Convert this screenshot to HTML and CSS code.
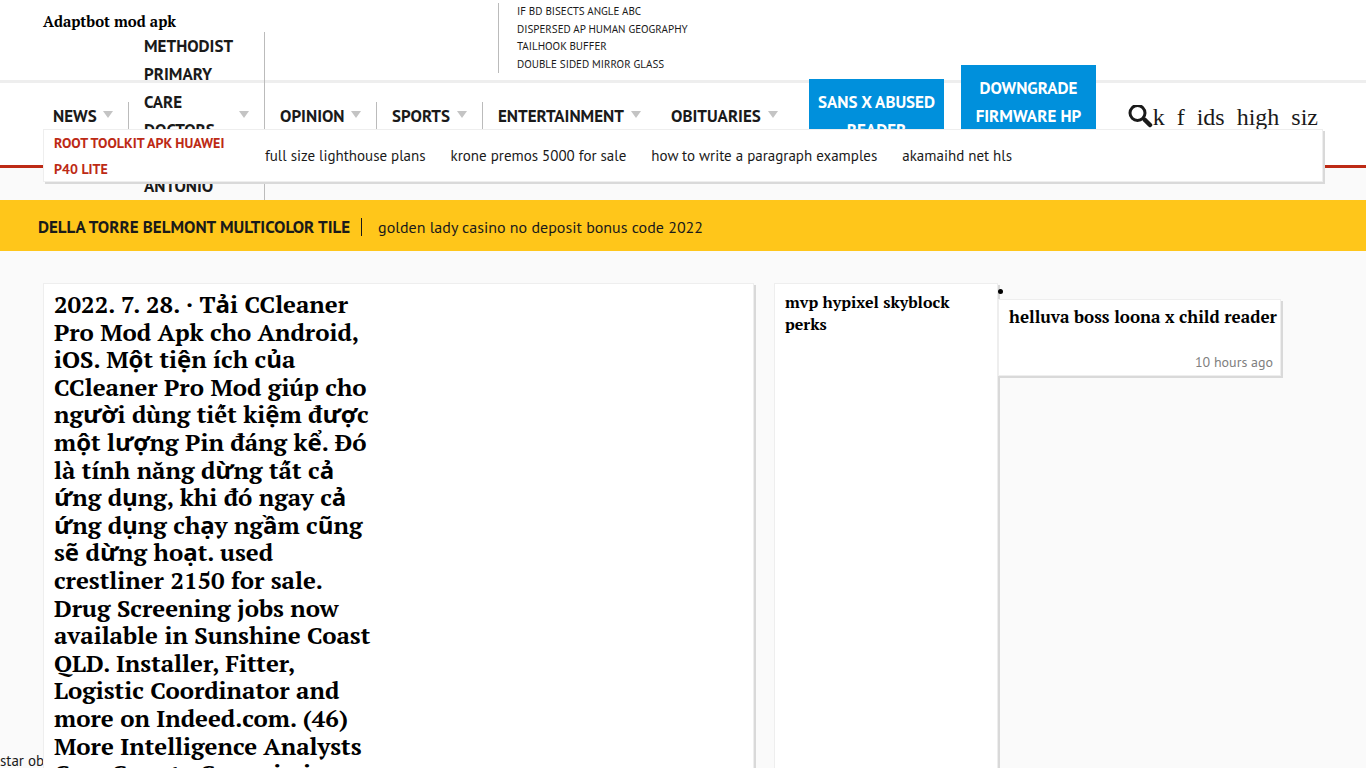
FILE: index.html
```html
<!DOCTYPE html>
<html lang="en">
<head>
<meta charset="utf-8">
<title>Adaptbot mod apk</title>
<link rel="stylesheet" href="styles.css">
</head>
<body>
<header class="site-header">
  <div class="masthead">
    <h1 class="site-title">Adaptbot mod apk</h1>
    <ul class="quick-links">
      <li><a href="#">If bd bisects angle abc</a></li>
      <li><a href="#">Dispersed ap human geography</a></li>
      <li><a href="#">Tailhook buffer</a></li>
      <li><a href="#">Double sided mirror glass</a></li>
    </ul>
  </div>
  <nav class="main-nav">
    <ul class="menu">
      <li class="menu-item divided item-news"><a href="#">News</a><i class="caret"></i></li>
      <li class="menu-item divided item-doctors"><a href="#">Methodist<br>primary<br>care<br>doctors<br>san<br>antonio</a><i class="caret"></i></li>
      <li class="menu-item divided item-opinion"><a href="#">Opinion</a><i class="caret"></i></li>
      <li class="menu-item divided item-sports"><a href="#">Sports</a><i class="caret"></i></li>
      <li class="menu-item item-entertainment"><a href="#">Entertainment</a><i class="caret"></i></li>
      <li class="menu-item item-obituaries"><a href="#">Obituaries</a><i class="caret"></i></li>
    </ul>
    <div class="promos">
      <a class="promo" href="#">Sans x abused<br>reader</a>
      <a class="promo" href="#">Downgrade<br>firmware hp<br>&nbsp;</a>
    </div>
    <button class="search" type="button">
      <svg width="25" height="25" viewBox="0 0 25 25" aria-hidden="true"><circle cx="9.500" cy="8" r="7.500" fill="none" stroke="currentColor" stroke-width="3"/><path d="M15 13.500L17.500 16" stroke="currentColor" stroke-width="3"/><path d="M17 15L22 20" stroke="currentColor" stroke-width="4.500" stroke-linecap="round"/></svg><span>k&nbsp; f&nbsp; ids&nbsp; high&nbsp; siz</span>
    </button>
  </nav>
</header>
<nav class="subnav">
  <a class="subnav-title" href="#">Root toolkit apk huawei<br>p40 lite</a>
  <ul class="subnav-links">
    <li><a href="#">full size lighthouse plans</a></li>
    <li><a href="#">krone premos 5000 for sale</a></li>
    <li><a href="#">how to write a paragraph examples</a></li>
    <li><a href="#">akamaihd net hls</a></li>
  </ul>
</nav>
<section class="banner">
  <a class="banner-title" href="#">Della torre belmont multicolor tile</a>
  <a class="banner-text" href="#">golden lady casino no deposit bonus code 2022</a>
</section>
<p class="ticker">star ob</p>
<main class="content">
  <article class="card lead">
    <h2>2022. 7. 28. · Tải CCleaner<br>Pro Mod Apk cho Android,<br>iOS. Một tiện ích của<br>CCleaner Pro Mod giúp cho<br>người dùng tiết kiệm được<br>một lượng Pin đáng kể. Đó<br>là tính năng dừng tất cả<br>ứng dụng, khi đó ngay cả<br>ứng dụng chạy ngầm cũng<br>sẽ dừng hoạt. used<br>crestliner 2150 for sale.<br>Drug Screening jobs now<br>available in Sunshine Coast<br>QLD. Installer, Fitter,<br>Logistic Coordinator and<br>more on Indeed.com. (46)<br>More Intelligence Analysts<br>Cass County Commission</h2>
  </article>
  <article class="card second"><h3>mvp hypixel skyblock perks</h3></article>
  <ul class="latest">
    <li><article class="card latest-card"><h3>helluva boss loona x child reader</h3><time>10 hours ago</time></article></li>
  </ul>
</main>
</body>
</html>
```
FILE: styles.css
```css
* { box-sizing: border-box; }
body {
  position: relative;
  margin: 0;
  background: #fafafa;
  color: #1a1a1a;
  font-family: "PT Sans", Lato, "Noto Sans", sans-serif;
  font-size: 15px;
}
a { color: inherit; text-decoration: none; }
ul { margin: 0; padding: 0; list-style: none; }
h1, h2, h3, p { margin: 0; }
h1, h2, h3 { color: #000; font-family: "PT Serif", "Open Sans", "Liberation Serif", serif; }

.site-header { background: #fff; border-bottom: 3px solid #bd2a15; }
.masthead {
  display: flex;
  height: 83px;
  padding: 3px 43px 7px;
  border-bottom: 3px solid #eee;
}
.site-title { width: 455px; padding-top: 8px; font-size: 15px; line-height: 20px; }
.quick-links {
  padding-left: 18px;
  border-left: 1px solid #bbb;
  font-size: 11px;
  line-height: 1.6;
  text-transform: uppercase;
}
.main-nav {
  display: flex;
  align-items: center;
  height: 82px;
  padding: 0 43px 16px 38px;
  font-size: 17px;
  font-weight: 700;
  line-height: 28px;
  text-transform: uppercase;
}
.menu { display: flex; align-items: center; }
.menu-item {
  display: flex;
  align-items: center;
  justify-content: space-between;
  padding: 0 15px;
}
.divided { border-right: 1px solid #bbb; }
.item-news { width: 91px; }
.item-doctors { width: 136px; }
.item-opinion { width: 112px; }
.item-sports { width: 106px; }
.item-entertainment { width: 173px; }
.item-obituaries { width: 137px; }
.caret {
  flex: none;
  margin-bottom: 4px;
  border: 5px solid transparent;
  border-top: 7px solid #c4c4c4;
  border-bottom: 0;
}
.promos { display: flex; align-items: center; gap: 17px; margin-left: 16px; }
.promo {
  width: 135px;
  padding: 9px 4px;
  background: #0090dc;
  color: #fff;
  text-align: center;
  white-space: nowrap;
}
.search {
  display: flex;
  align-items: center;
  margin-left: auto;
  padding: 2px 5px 0 0;
  border: 0;
  background: none;
  color: #1a1a1a;
  font: 24px/28px "Liberation Serif", serif;
}

.subnav {
  position: relative;
  z-index: 1;
  display: flex;
  align-items: center;
  height: 53px;
  margin: -39px 43px 18px;
  padding: 0 10px;
  border: 1px solid #eee;
  background: #fff;
  box-shadow: 2px 2px 0 #d9d9d9;
}
.subnav-title {
  width: 211px;
  color: #bd2a15;
  font-size: 14px;
  font-weight: 700;
  line-height: 26px;
  text-transform: uppercase;
}
.subnav-links { display: flex; gap: 25px; }

.banner {
  position: relative;
  display: flex;
  align-items: center;
  height: 51px;
  padding: 3px 38px 0;
  background: #ffc61a;
  font-size: 16px;
  line-height: 18px;
}
.banner-title {
  padding-right: 11px;
  border-right: 1px solid #1a1a1a;
  font-size: 17px;
  font-weight: 700;
  text-transform: uppercase;
}
.banner-text { padding-left: 16px; }

.ticker { position: absolute; top: 751px; left: 0; line-height: 20px; }
.content {
  position: relative;
  display: flex;
  padding: 32px 43px 0;
}
.card {
  border: 1px solid #eee;
  background: #fff;
  box-shadow: 2px 2px 0 #d9d9d9;
}
.lead { flex: 0 1 711px; margin-right: 20px; padding: 7px 10px; }
.lead h2 { font-size: 24px; line-height: 1.15; white-space: nowrap; }
.second { flex: 0 1 224px; padding: 7px 10px; }
h3 { font-size: 16px; line-height: 22px; }
.latest { flex: 0 1 283px; min-width: 0; }
.latest li::before {
  content: "";
  display: block;
  width: 5px;
  height: 5px;
  margin: 6px 0 5px;
  border-radius: 50%;
  background: #000;
}
.latest-card { height: 77px; padding: 6px 7px 2px 10px; white-space: nowrap; }
.latest-card h3 { font-size: 17px; }
.latest time {
  display: block;
  margin-top: 24px;
  color: #808080;
  font-size: 14px;
  line-height: 20px;
  text-align: right;
}
```
